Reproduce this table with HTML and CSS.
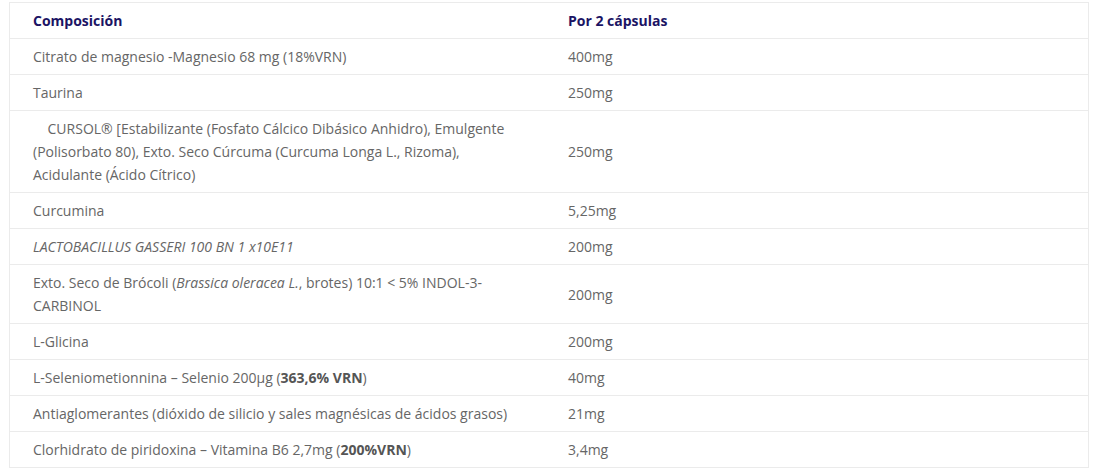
FILE: index.html
```html
<!DOCTYPE html>
<html lang="es">
<head>
<meta charset="utf-8">
<link rel="stylesheet" href="styles.css">
</head>
<body>
<div class="wrap">
<table class="comp">
<thead>
<tr><th class="c1">Composición</th><th class="c2">Por 2 cápsulas</th></tr>
</thead>
<tbody>
<tr><td>Citrato de magnesio -Magnesio 68 mg (18%VRN)</td><td>400mg</td></tr>
<tr><td>Taurina</td><td>250mg</td></tr>
<tr><td>&nbsp;&nbsp;&nbsp; CURSOL® [Estabilizante (Fosfato Cálcico Dibásico Anhidro), Emulgente (Polisorbato 80), Exto. Seco Cúrcuma (Curcuma Longa L., Rizoma), Acidulante (Ácido Cítrico)</td><td>250mg</td></tr>
<tr><td>Curcumina</td><td>5,25mg</td></tr>
<tr><td><em>LACTOBACILLUS GASSERI 100 BN 1 x10E11</em></td><td>200mg</td></tr>
<tr><td>Exto. Seco de Brócoli (<em>Brassica oleracea L.</em>, brotes) 10:1 &lt; 5% INDOL-3-CARBINOL</td><td>200mg</td></tr>
<tr><td>L-Glicina</td><td>200mg</td></tr>
<tr><td>L-Seleniometionnina – Selenio 200µg (<strong>363,6% VRN</strong>)</td><td>40mg</td></tr>
<tr><td>Antiaglomerantes (dióxido de silicio y sales magnésicas de ácidos grasos)</td><td>21mg</td></tr>
<tr><td>Clorhidrato de piridoxina – Vitamina B6 2,7mg (<strong>200%VRN</strong>)</td><td>3,4mg</td></tr>
</tbody>
</table>
</div>
</body>
</html>
```

FILE: styles.css
```css
html, body {
  margin: 0;
  padding: 0;
  background: #ffffff;
}
.wrap {
  padding: 2px 8px 0 9px;
}
.comp {
  width: 1080px;
  border-collapse: collapse;
  table-layout: fixed;
  font-family: "Open Sans", "Liberation Sans", sans-serif;
  font-size: 14px;
  line-height: 23px;
  color: #666666;
  border: 1px solid #ebebeb;
}
.comp th, .comp td {
  text-align: left;
  vertical-align: middle;
  padding: 6px 24px 6px 23px;
  border-top: 1px solid #ebebeb;
}
.comp th {
  font-weight: 700;
  color: #1b1464;
}
.comp .c1 { width: 488px; }
.comp strong { font-weight: 700; color: #555; }
.comp em { font-style: italic; }
```
